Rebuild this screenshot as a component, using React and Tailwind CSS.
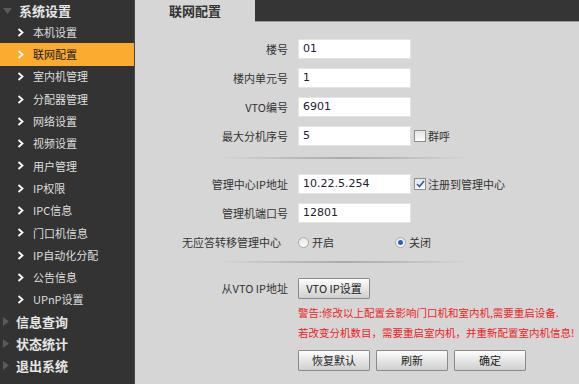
const cjk = { fontFamily: '"Noto Sans CJK SC", "Liberation Sans", sans-serif' };
const val = { fontFamily: '"DejaVu Sans", "Noto Sans CJK SC", sans-serif' };

function Chevron() {
  return (
    <svg width="7" height="9" viewBox="0 0 7 9" className="shrink-0">
      <polyline points="1.5,1 5.5,4.5 1.5,8" fill="none" stroke="#ffffff" strokeWidth="1.8" />
    </svg>
  );
}

function Tri({ down }) {
  return down ? (
    <svg width="9" height="6" viewBox="0 0 9 6" className="shrink-0">
      <polygon points="0,0 9,0 4.5,6" fill="#5a5a5a" />
    </svg>
  ) : (
    <svg width="6" height="9" viewBox="0 0 6 9" className="shrink-0">
      <polygon points="0,0 6,4.5 0,9" fill="#5a5a5a" />
    </svg>
  );
}

function Group({ title, down, h = "h-[22px]" }) {
  return (
    <div className={`flex items-center ${h} pl-[3px] gap-[7px]`}>
      <Tri down={down} />
      <span className="text-[13px] font-bold text-[#e6e6e6]" style={cjk}>{title}</span>
    </div>
  );
}

function Item({ label, active }) {
  return (
    <div className={`flex items-center h-[22.3px] pl-[17px] gap-[9px] ${active ? "bg-[#fbab2f]" : ""}`}>
      <Chevron />
      <span className={`text-[11px] ${active ? "text-[#1a1a1a]" : "text-[#dedede]"}`} style={cjk}>{label}</span>
    </div>
  );
}

function Row({ label, children, pr = "pr-0", className = "" }) {
  return (
    <div className={`flex items-center h-[20px] ${className}`}>
      <div className={`w-[153px] text-right text-[11px] text-[#333] ${pr}`} style={cjk}>{label}</div>
      <div className="flex items-center pl-[10px]">{children}</div>
    </div>
  );
}

function Field({ value }) {
  return (
    <div className="w-[113px] h-[20px] bg-white border border-[#e4e4e4] flex items-center pl-[4px] text-[11px] text-[#1e2030]" style={val}>
      {value}
    </div>
  );
}

function Check({ on, label }) {
  return (
    <div className="flex items-center ml-[3px] gap-[2px]">
      <div className="w-[12px] h-[12px] border border-[#8f8f8f] bg-gradient-to-b from-[#e6e6e6] to-[#fbfbfb] flex items-center justify-center">
        {on && (
          <svg width="9" height="8" viewBox="0 0 9 8">
            <polyline points="1,4 3.5,6.5 8,1" fill="none" stroke="#2b5aa8" strokeWidth="1.6" />
          </svg>
        )}
      </div>
      <span className="text-[11px] text-[#333]" style={cjk}>{label}</span>
    </div>
  );
}

function Radio({ on, label, w }) {
  return (
    <div className={`flex items-center gap-[3px] ${w}`}>
      <div className="w-[11px] h-[11px] rounded-full border border-[#a8a8a8] bg-gradient-to-b from-[#e8e8e8] to-[#fafafa] flex items-center justify-center">
        {on && <div className="w-[5px] h-[5px] rounded-full bg-[#2a63b8]" />}
      </div>
      <span className="text-[11px] text-[#333]" style={cjk}>{label}</span>
    </div>
  );
}

function Btn({ children }) {
  return (
    <button className="w-[72px] h-[21px] border border-[#8a8a8a] rounded-[1px] bg-gradient-to-b from-[#fdfdfd] to-[#cfcfcf] text-[11px] text-[#222]" style={cjk}>
      {children}
    </button>
  );
}

function Sep() {
  return <div className="ml-[83px] w-[252px] h-[2px] bg-gradient-to-r from-transparent via-[#a9a9a9] to-transparent" />;
}

export default function App() {
  return (
    <div className="flex w-[579px] h-[384px] overflow-hidden bg-[#d6d6d6]">
      <aside className="w-[135px] shrink-0 bg-[#333333] border-r border-[#474747]">
        <Group title="系统设置" down h="h-[21px]" />
        <Item label="本机设置" />
        <Item label="联网配置" active />
        <Item label="室内机管理" />
        <Item label="分配器管理" />
        <Item label="网络设置" />
        <Item label="视频设置" />
        <Item label="用户管理" />
        <Item label="IP权限" />
        <Item label="IPC信息" />
        <Item label="门口机信息" />
        <Item label="IP自动化分配" />
        <Item label="公告信息" />
        <Item label="UPnP设置" />
        <Group title="信息查询" />
        <Group title="状态统计" />
        <Group title="退出系统" />
      </aside>

      <main className="flex-1 flex flex-col">
        <div className="flex h-[22px] shrink-0">
          <div className="w-[120px] flex items-center justify-center text-[13px] font-bold text-[#333]" style={cjk}>联网配置</div>
          <div className="flex-1 bg-[#353535] border-b border-[#9a9a9a]" />
        </div>

        <div className="flex flex-col pt-[17px]">
          <Row label="楼号"><Field value="01" /></Row>
          <Row label="楼内单元号" className="mt-[9px]"><Field value="1" /></Row>
          <Row label="VTO编号" className="mt-[9px]"><Field value="6901" /></Row>
          <Row label="最大分机序号" className="mt-[9px]">
            <Field value="5" />
            <Check label="群呼" />
          </Row>
          <div className="mt-[11px]"><Sep /></div>
          <Row label="管理中心IP地址" className="mt-[15px]">
            <Field value="10.22.5.254" />
            <Check on label="注册到管理中心" />
          </Row>
          <Row label="管理机端口号" className="mt-[9px]"><Field value="12801" /></Row>
          <Row label="无应答转移管理中心" pr="pr-[7px]" className="mt-[9px]">
            <Radio label="开启" w="w-[97px]" />
            <Radio on label="关闭" />
          </Row>
          <div className="mt-[9px]"><Sep /></div>
          <Row label="从VTO IP地址" className="mt-[15px]">
            <Btn>VTO IP设置</Btn>
          </Row>
          <div className="pl-[163px] mt-[5px] text-[10.5px] leading-[20px] text-[#ee1c1c]" style={cjk}>
            <div>警告:修改以上配置会影响门口机和室内机,需要重启设备.</div>
            <div>若改变分机数目，需要重启室内机，并重新配置室内机信息!</div>
          </div>
          <div className="pl-[163px] mt-[7px] flex gap-[6px]">
            <Btn>恢复默认</Btn>
            <Btn>刷新</Btn>
            <Btn>确定</Btn>
          </div>
        </div>
      </main>
    </div>
  );
}
